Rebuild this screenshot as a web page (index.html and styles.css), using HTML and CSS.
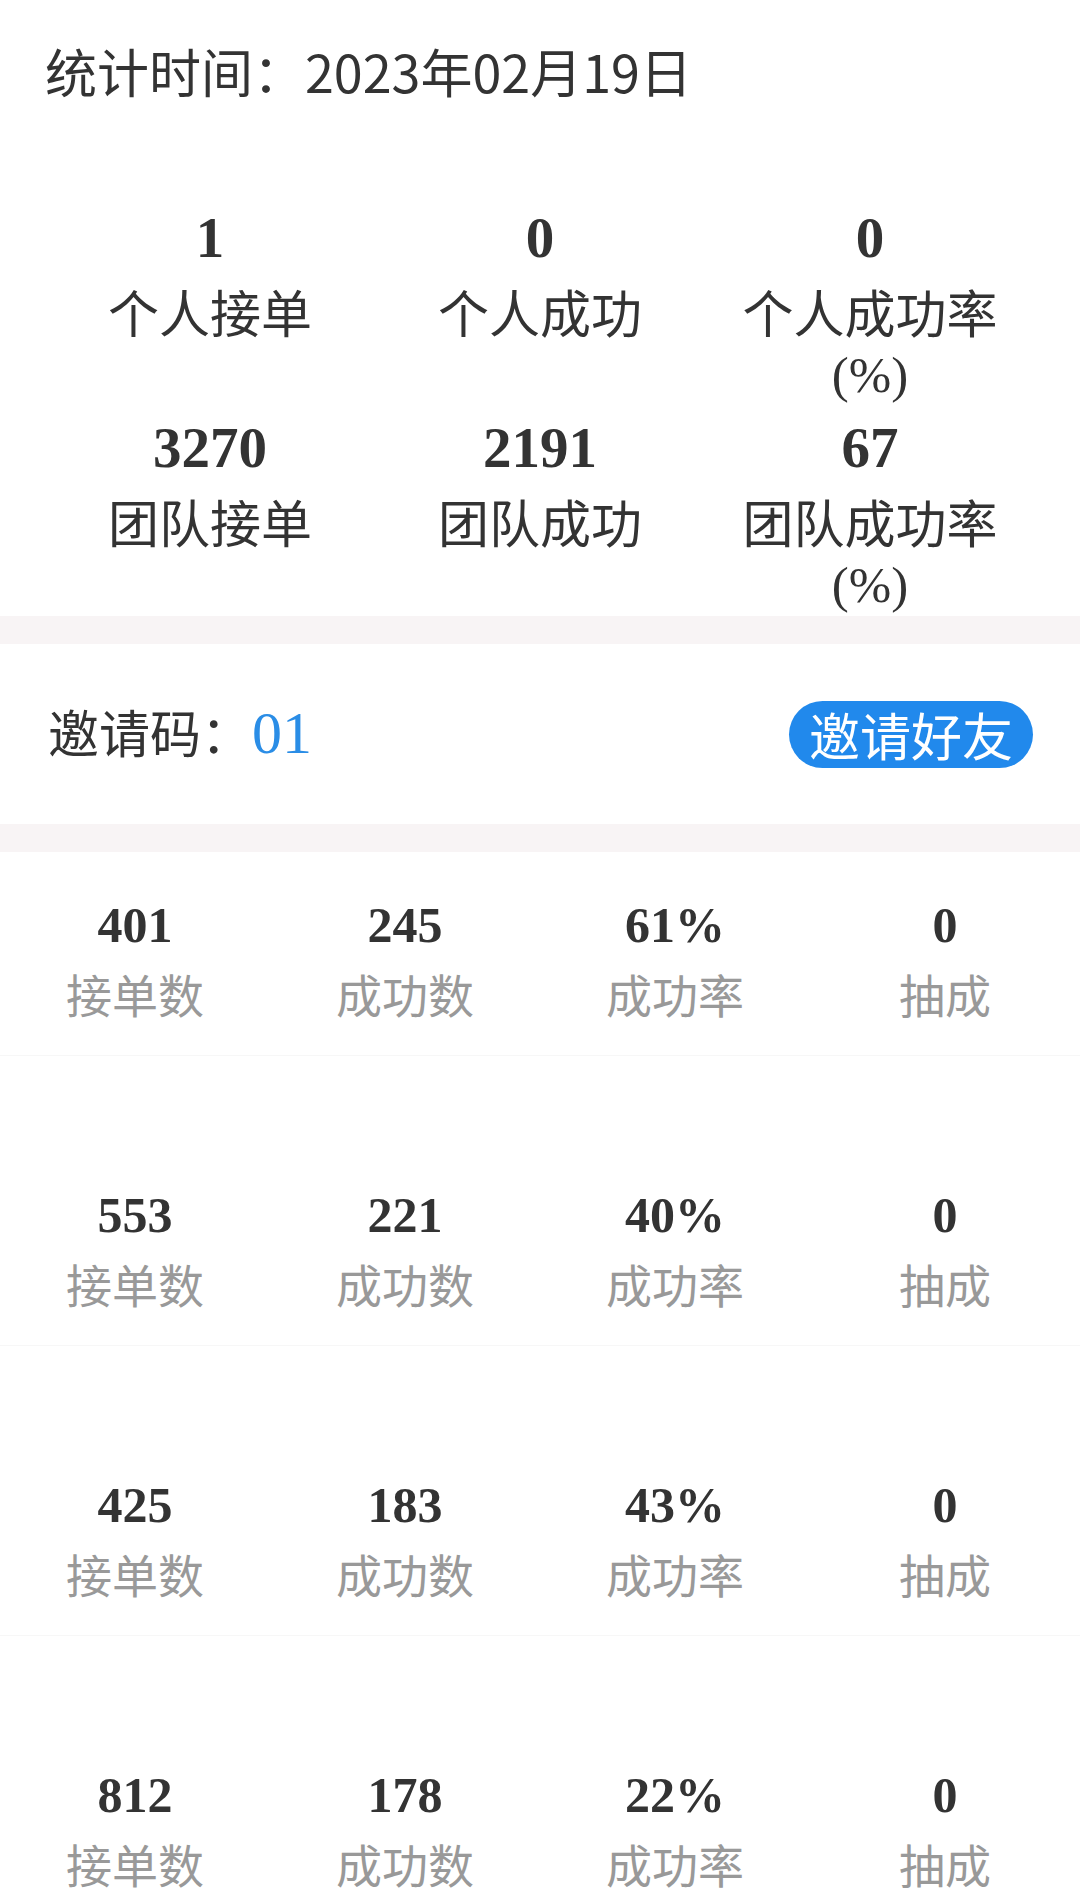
FILE: index.html
```html
<!DOCTYPE html>
<html lang="zh-CN">
<head>
    <meta charset="UTF-8">
    <meta name="viewport" content="width=device-width, initial-scale=1.0">
    <title>团队统计</title>
    <link rel="stylesheet" href="styles.css">
</head>
<body>

    <div class="page">
        <section class="summary">
            <div class="date">统计时间：2023年02月19日</div>

            <div class="stats">
                <div class="stat">
                    <div class="stat-num">1</div>
                    <div class="stat-label">个人接单</div>
                </div>
                <div class="stat">
                    <div class="stat-num">0</div>
                    <div class="stat-label">个人成功</div>
                </div>
                <div class="stat">
                    <div class="stat-num">0</div>
                    <div class="stat-label">个人成功率<span class="unit">(%)</span></div>
                </div>
                <div class="stat">
                    <div class="stat-num">3270</div>
                    <div class="stat-label">团队接单</div>
                </div>
                <div class="stat">
                    <div class="stat-num">2191</div>
                    <div class="stat-label">团队成功</div>
                </div>
                <div class="stat">
                    <div class="stat-num">67</div>
                    <div class="stat-label">团队成功率<span class="unit">(%)</span></div>
                </div>
            </div>
        </section>

        <div class="gap"></div>

        <section class="invite">
            <div class="invite-code">邀请码：<span class="code">01</span></div>
            <button class="invite-btn">邀请好友</button>
        </section>

        <div class="gap"></div>

        <section class="team-list">
            <div class="member">
                <div class="member-stats">
                    <div class="cell"><div class="cell-num">401</div><div class="cell-label">接单数</div></div>
                    <div class="cell"><div class="cell-num">245</div><div class="cell-label">成功数</div></div>
                    <div class="cell"><div class="cell-num">61%</div><div class="cell-label">成功率</div></div>
                    <div class="cell"><div class="cell-num">0</div><div class="cell-label">抽成</div></div>
                </div>
            </div>

            <div class="member">
                <div class="member-name"></div>
                <div class="member-stats">
                    <div class="cell"><div class="cell-num">553</div><div class="cell-label">接单数</div></div>
                    <div class="cell"><div class="cell-num">221</div><div class="cell-label">成功数</div></div>
                    <div class="cell"><div class="cell-num">40%</div><div class="cell-label">成功率</div></div>
                    <div class="cell"><div class="cell-num">0</div><div class="cell-label">抽成</div></div>
                </div>
            </div>

            <div class="member">
                <div class="member-name"></div>
                <div class="member-stats">
                    <div class="cell"><div class="cell-num">425</div><div class="cell-label">接单数</div></div>
                    <div class="cell"><div class="cell-num">183</div><div class="cell-label">成功数</div></div>
                    <div class="cell"><div class="cell-num">43%</div><div class="cell-label">成功率</div></div>
                    <div class="cell"><div class="cell-num">0</div><div class="cell-label">抽成</div></div>
                </div>
            </div>

            <div class="member">
                <div class="member-name"></div>
                <div class="member-stats">
                    <div class="cell"><div class="cell-num">812</div><div class="cell-label">接单数</div></div>
                    <div class="cell"><div class="cell-num">178</div><div class="cell-label">成功数</div></div>
                    <div class="cell"><div class="cell-num">22%</div><div class="cell-label">成功率</div></div>
                    <div class="cell"><div class="cell-num">0</div><div class="cell-label">抽成</div></div>
                </div>
            </div>
        </section>
    </div>

</body>
</html>
```

FILE: styles.css
```css
body {
    margin: 0;
    background-color: #fff;
    color: #333;
    font-family: "Noto Sans CJK SC", "Noto Sans", sans-serif;
}
.page {
    width: 1080px;
}

/* top summary */
.summary {
    padding: 0 45px;
}
.date {
    padding-top: 40px;
    font-size: 52px;
    line-height: 62px;
}
.stats {
    display: grid;
    grid-template-columns: repeat(3, 1fr);
    margin-top: 94px;
    text-align: center;
}
.stat-num {
    font-family: "Liberation Serif", serif;
    font-weight: bold;
    font-size: 57px;
    line-height: 84px;
}
.stat-label {
    font-size: 51px;
    line-height: 62px;
}
.unit {
    display: block;
    padding-top: 2px;
    font-family: "Liberation Serif", serif;
}

.gap {
    height: 28px;
    background-color: #f8f4f5;
}

/* invite row */
.invite {
    display: flex;
    align-items: center;
    justify-content: space-between;
    height: 180px;
    padding: 0 47px 0 48px;
}
.invite-code {
    margin-bottom: 6px;
    font-size: 51px;
}
.code {
    font-family: "Liberation Serif", serif;
    font-size: 60px;
    color: #2a8de6;
}
.invite-btn {
    height: 67px;
    padding: 0 20px;
    border: none;
    border-radius: 34px;
    background-color: #2189ec;
    color: #fff;
    font-family: inherit;
    font-size: 51px;
    line-height: 67px;
}

/* team members */
.member {
    padding: 38px 0 29px;
}
.member + .member {
    border-top: 1px solid #f7f7f7;
}
.member-name {
    height: 48px;
    margin-bottom: 38px;
}
.member-stats {
    display: grid;
    grid-template-columns: repeat(4, 1fr);
    text-align: center;
}
.cell-num {
    font-family: "Liberation Serif", serif;
    font-weight: bold;
    font-size: 50px;
    line-height: 70px;
}
.cell-label {
    font-size: 46px;
    line-height: 66px;
    color: #999;
}
```
